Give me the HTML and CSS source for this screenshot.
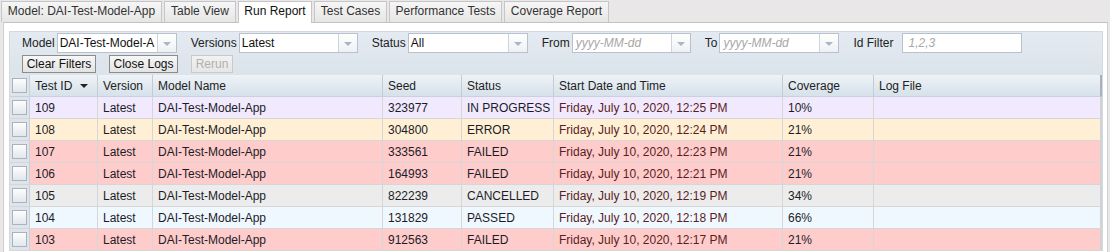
FILE: index.html
```html
<!DOCTYPE html>
<html lang="en">
<head>
    <meta charset="UTF-8">
    <title>Run Report</title>
    <link rel="stylesheet" href="styles.css">
</head>
<body>

    <!-- Tabs -->
    <div class="tabs">
        <div class="tab w-model">Model: DAI-Test-Model-App</div>
        <div class="tab w-table">Table View</div>
        <div class="tab tab-active w-run">Run Report</div>
        <div class="tab w-cases">Test Cases</div>
        <div class="tab w-perf">Performance Tests</div>
        <div class="tab w-cov">Coverage Report</div>
    </div>

    <div class="page">
        <div class="panel">

            <!-- Filter row -->
            <div class="filters">
                <label class="flabel">Model</label>
                <div class="combo w120"><span class="combo-text">DAI-Test-Model-A</span><span class="combo-btn"><i class="tri"></i></span></div>

                <label class="flabel">Versions</label>
                <div class="combo w119"><span class="combo-text">Latest</span><span class="combo-btn"><i class="tri"></i></span></div>

                <label class="flabel">Status</label>
                <div class="combo w120"><span class="combo-text">All</span><span class="combo-btn"><i class="tri"></i></span></div>

                <label class="flabel">From</label>
                <div class="combo w119"><span class="combo-text ph">yyyy-MM-dd</span><span class="combo-btn"><i class="tri"></i></span></div>

                <label class="flabel">To</label>
                <div class="combo w120"><span class="combo-text ph">yyyy-MM-dd</span><span class="combo-btn"><i class="tri"></i></span></div>

                <label class="flabel id-label">Id Filter</label>
                <div class="combo w120 plain"><span class="combo-text ph">1,2,3</span></div>
            </div>

            <!-- Buttons -->
            <div class="actions">
                <button class="btn w-clear">Clear Filters</button>
                <button class="btn w-close">Close Logs</button>
                <button class="btn btn-disabled w-rerun">Rerun</button>
            </div>

            <!-- Grid -->
            <table class="grid">
                <colgroup>
                    <col style="width:20px">
                    <col style="width:68px">
                    <col style="width:55px">
                    <col style="width:230px">
                    <col style="width:79px">
                    <col style="width:92px">
                    <col style="width:229px">
                    <col style="width:91px">
                    <col style="width:228px">
                </colgroup>
                <thead>
                    <tr>
                        <th class="chk"><span class="box"></span></th>
                        <th>Test ID <i class="sort"></i></th>
                        <th>Version</th>
                        <th>Model Name</th>
                        <th>Seed</th>
                        <th>Status</th>
                        <th>Start Date and Time</th>
                        <th>Coverage</th>
                        <th class="last">Log File</th>
                    </tr>
                </thead>
                <tbody>
                    <tr class="progress">
                        <td class="chk"><span class="box"></span></td>
                        <td>109</td><td>Latest</td><td>DAI-Test-Model-App</td><td>323977</td>
                        <td>IN PROGRESS</td><td class="date">Friday, July 10, 2020, 12:25 PM</td><td>10%</td><td class="last"></td>
                    </tr>
                    <tr class="error">
                        <td class="chk"><span class="box"></span></td>
                        <td>108</td><td>Latest</td><td>DAI-Test-Model-App</td><td>304800</td>
                        <td>ERROR</td><td class="date">Friday, July 10, 2020, 12:24 PM</td><td>21%</td><td class="last"></td>
                    </tr>
                    <tr class="failed">
                        <td class="chk"><span class="box"></span></td>
                        <td>107</td><td>Latest</td><td>DAI-Test-Model-App</td><td>333561</td>
                        <td>FAILED</td><td class="date">Friday, July 10, 2020, 12:23 PM</td><td>21%</td><td class="last"></td>
                    </tr>
                    <tr class="failed">
                        <td class="chk"><span class="box"></span></td>
                        <td>106</td><td>Latest</td><td>DAI-Test-Model-App</td><td>164993</td>
                        <td>FAILED</td><td class="date">Friday, July 10, 2020, 12:21 PM</td><td>21%</td><td class="last"></td>
                    </tr>
                    <tr class="cancelled">
                        <td class="chk"><span class="box"></span></td>
                        <td>105</td><td>Latest</td><td>DAI-Test-Model-App</td><td>822239</td>
                        <td>CANCELLED</td><td class="date">Friday, July 10, 2020, 12:19 PM</td><td>34%</td><td class="last"></td>
                    </tr>
                    <tr class="passed">
                        <td class="chk"><span class="box"></span></td>
                        <td>104</td><td>Latest</td><td>DAI-Test-Model-App</td><td>131829</td>
                        <td>PASSED</td><td class="date">Friday, July 10, 2020, 12:18 PM</td><td>66%</td><td class="last"></td>
                    </tr>
                    <tr class="failed">
                        <td class="chk"><span class="box"></span></td>
                        <td>103</td><td>Latest</td><td>DAI-Test-Model-App</td><td>912563</td>
                        <td>FAILED</td><td class="date">Friday, July 10, 2020, 12:17 PM</td><td>21%</td><td class="last"></td>
                    </tr>
                </tbody>
            </table>
        </div>
    </div>

</body>
</html>
```

FILE: styles.css
```css
/* General */
body {
    margin: 0;
    background-color: #e9e7e7;
    font-family: "Liberation Sans", Arial, sans-serif;
    font-size: 12px;
    color: #222;
    overflow: hidden;
}

/* Tabs */
.tabs {
    display: flex;
    align-items: flex-end;
    gap: 2px;
    height: 22px;
    padding-left: 1px;
}

.tab {
    box-sizing: border-box;
    height: 21px;
    line-height: 19px;
    text-align: center;
    border: 1px solid #c6c6c6;
    border-bottom: none;
    background: linear-gradient(#f6f6f6, #e6e6e6);
    color: #333;
    white-space: nowrap;
}

.tab-active {
    height: 22px;
    margin-bottom: -1px;
    background: #fff;
    color: #111;
    position: relative;
}

.w-model { width: 161px; }
.w-table { width: 72px; }
.w-run { width: 74px; }
.w-cases { width: 73px; }
.w-perf { width: 113px; }
.w-cov { width: 105px; }

/* Page body */
.page {
    margin: 0 2px 0 3px;
    border-top: 1px solid #c2c2c2;
    border-left: 1px solid #cfcfcf;
    border-right: 1px solid #cfcfcf;
    background: #fff;
    padding: 8px 4px 0 5px;
    height: 221px;
    overflow: hidden;
}

.panel {
    border: 1px solid #d2d9e1;
    border-bottom: none;
    background: linear-gradient(#e4eaf1, #dbe3eb 42px, #dbe3eb);
    width: 1092px;
}

/* Filters */
.filters {
    display: flex;
    align-items: center;
    height: 20px;
    padding: 1px 0 0 12px;
}

.flabel {
    margin-right: 2px;
    color: #222;
    white-space: nowrap;
}

.flabel.id-label {
    margin-right: 9px;
}

.combo {
    box-sizing: border-box;
    display: flex;
    height: 20px;
    border: 1px solid #b9c2cc;
    background: #fff;
    margin-right: 14px;
}

.w120 { width: 120px; }
.w119 { width: 119px; }

.combo-text {
    flex: 1;
    overflow: hidden;
    white-space: nowrap;
    line-height: 18px;
    padding-left: 2px;
    color: #111;
}

.combo-text.ph {
    color: #a8a8a8;
    font-style: italic;
    padding-left: 3px;
}

.combo.plain .combo-text.ph {
    padding-left: 5px;
}

.combo-btn {
    width: 18px;
    border-left: 1px solid #cdd4dc;
    background: linear-gradient(#ffffff, #eef1f4);
    display: flex;
    align-items: center;
    justify-content: center;
}

.tri {
    width: 0;
    height: 0;
    border-left: 4px solid transparent;
    border-right: 4px solid transparent;
    border-top: 4px solid #a9b6c4;
    margin-top: 1px;
}

/* Buttons */
.actions {
    display: flex;
    gap: 13px;
    padding: 2px 0 0 12px;
    height: 18px;
}

.btn {
    box-sizing: border-box;
    height: 18px;
    padding: 0;
    font-family: inherit;
    font-size: 12px;
    color: #111;
    border: 1px solid #8c8c8c;
    background: linear-gradient(#f7f7f7, #e3e3e3);
    border-radius: 0;
    line-height: 15px;
}

.btn-disabled {
    color: #b0b0b0;
    border-color: #c9c9c9;
    background: linear-gradient(#f2f2f2, #e6e6e6);
}

.w-clear { width: 74px; }
.w-close { width: 69px; }
.w-rerun { width: 42px; }

/* Grid */
.grid {
    margin-top: 2px;
    width: 1092px;
    table-layout: fixed;
    border-collapse: separate;
    border-spacing: 0;
    background: #fff;
}

.grid th {
    box-sizing: border-box;
    height: 22px;
    padding: 0 0 0 5px;
    text-align: left;
    font-weight: normal;
    color: #222;
    background: linear-gradient(#eef3f7, #d6e1ea);
    border-right: 1px solid #c3ccd5;
    border-bottom: 1px solid #c9d2db;
    white-space: nowrap;
}

.grid th.last {
    border-right: 2px solid #a9b2bb;
}

.sort {
    display: inline-block;
    width: 0;
    height: 0;
    border-left: 4px solid transparent;
    border-right: 4px solid transparent;
    border-top: 4px solid #222;
    margin-left: 4px;
    vertical-align: middle;
}

.grid td {
    box-sizing: border-box;
    height: 22px;
    padding: 0 0 0 5px;
    border-right: 1px solid #d6d6d6;
    border-bottom: 1px solid #d6d6d6;
    white-space: nowrap;
    overflow: hidden;
    color: #1c1c28;
}

.grid td.last {
    border-right: 2px solid #d2d2d2;
}

.grid td.date {
    color: #5a1d22;
}

.grid .chk {
    padding: 0;
    text-align: center;
    background: #dde4ec;
    border-right: 1px solid #c8d0d8;
}

.grid th.chk {
    background: #dde4ec;
}

.box {
    display: inline-block;
    box-sizing: border-box;
    width: 15px;
    height: 15px;
    border: 1px solid #aab3bd;
    background: linear-gradient(#fdfdfd, #e2e7ec);
    vertical-align: middle;
}

/* Row states */
.progress td { background: #f1e9fd; }
.error td { background: #fff0d5; }
.failed td { background: #ffcccc; }
.cancelled td { background: #ececec; }
.passed td { background: #f0f8ff; }
```
